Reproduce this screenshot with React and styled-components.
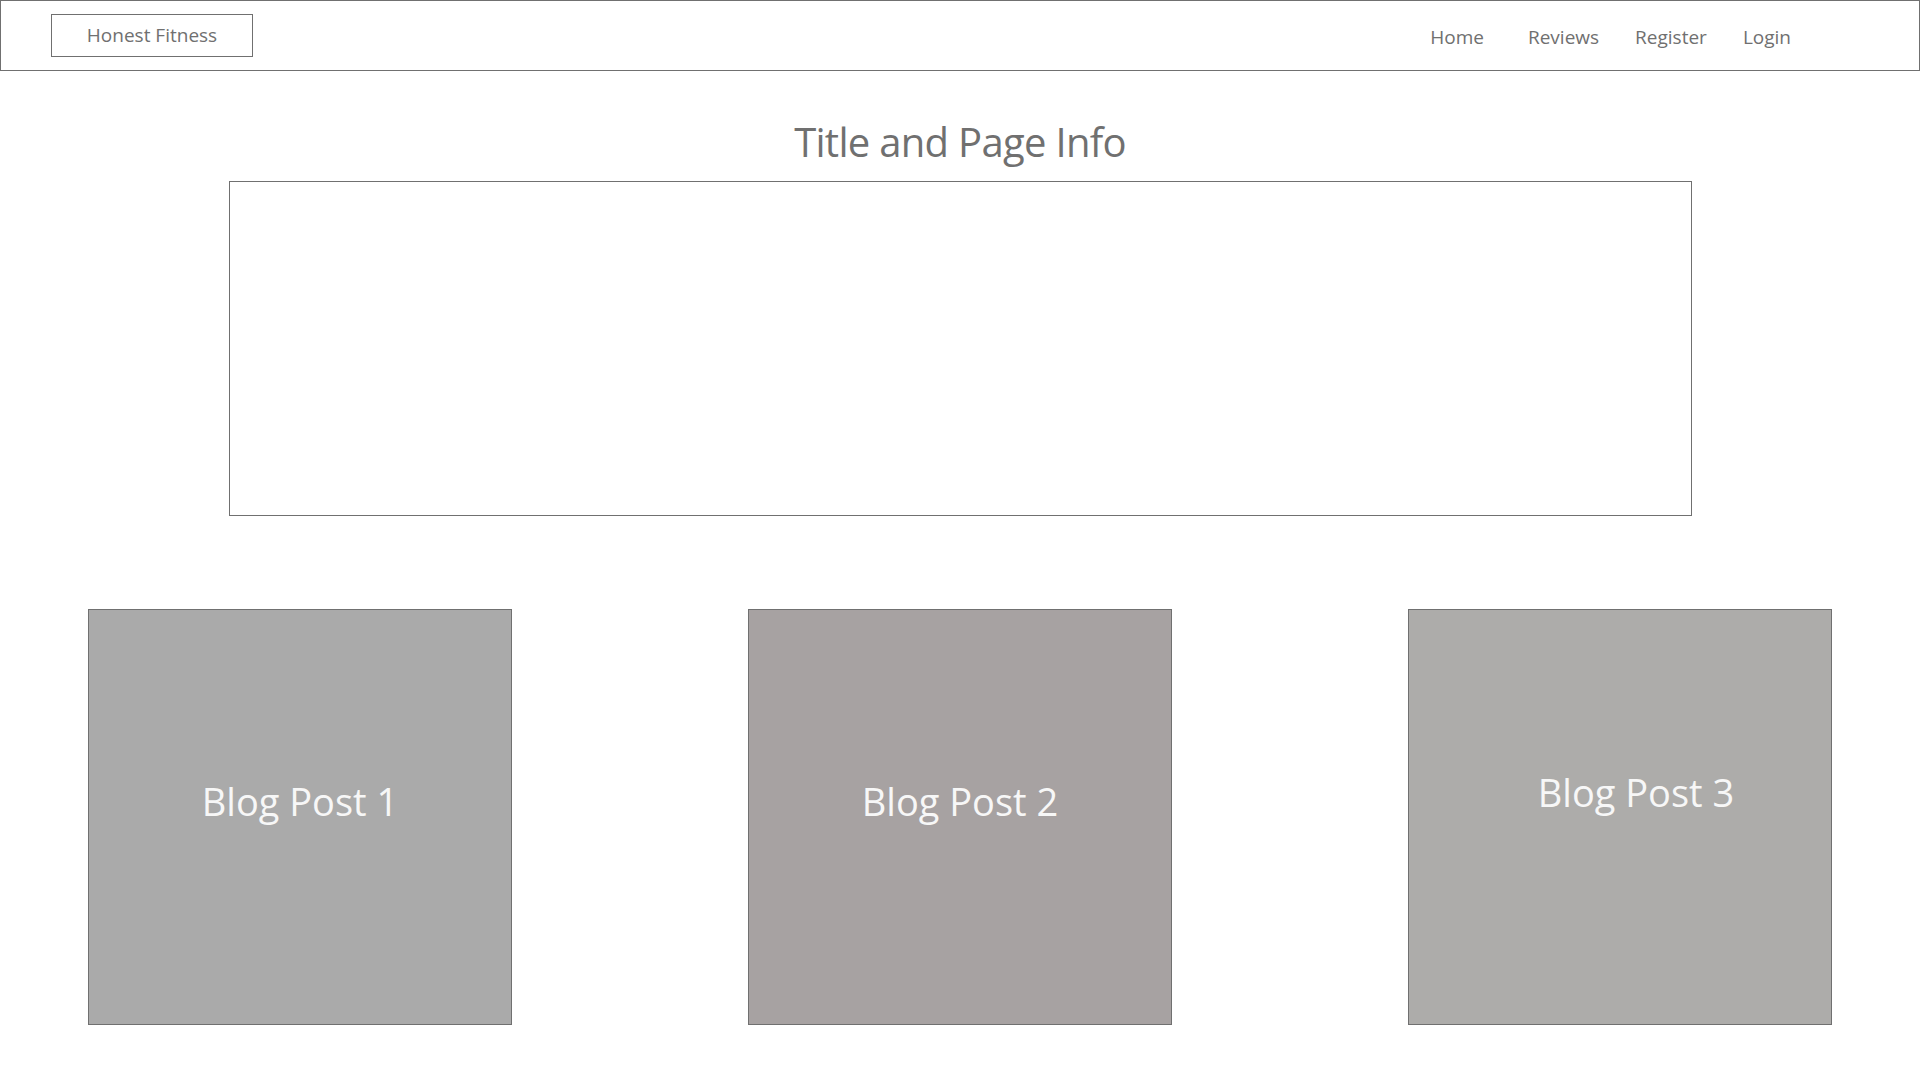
import React from 'react'
import styled, { createGlobalStyle } from 'styled-components'

const GlobalStyle = createGlobalStyle`
    html, body {
        margin: 0;
        padding: 0;
        background: #ffffff;
        font-family: "Open Sans", "Noto Sans", sans-serif;
    }
`;

const Page = styled.div`
    width: 1920px;
    min-height: 1080px;
    display: flex;
    flex-direction: column;
    align-items: center;
`;

const Header = styled.header`
    box-sizing: border-box;
    width: 100%;
    height: 71px;
    border: 1px solid #707070;
    display: flex;
    align-items: center;
    padding: 0 128px 0 50px;
`;

const Logo = styled.div`
    box-sizing: border-box;
    width: 202px;
    height: 43px;
    border: 1px solid #707070;
    display: flex;
    align-items: center;
    justify-content: center;
    padding-bottom: 2px;
    color: #707070;
    font-size: 19px;
`;

const Nav = styled.nav`
    margin-left: auto;
    display: flex;
    gap: 36px;
    padding-top: 2px;
`;

const NavLink = styled.a`
    color: #707070;
    font-size: 19px;
    text-decoration: none;
    margin-right: ${props => props.$extra || 0}px;
`;

const Title = styled.h1`
    margin: 49px 0 0;
    font-size: 40px;
    font-weight: 400;
    line-height: 44px;
    color: #707070;
    letter-spacing: -0.7px;
`;

const InfoBox = styled.section`
    box-sizing: border-box;
    width: 1463px;
    height: 335px;
    margin-top: 17px;
    border: 1px solid #707070;
`;

const CardRow = styled.div`
    box-sizing: border-box;
    width: 100%;
    margin-top: 93px;
    padding: 0 88px;
    display: flex;
    justify-content: space-between;
`;

const Card = styled.article`
    box-sizing: border-box;
    width: 424px;
    height: 416px;
    border: 1px solid #707070;
    background: ${props => props.$bg};
    display: flex;
    align-items: center;
    justify-content: center;
    padding: 0 0 ${props => 32 + props.$lift}px ${props => props.$nudge}px;
    color: #f7f7f7;
    font-size: 38px;
`;

const posts = [
    { title: 'Blog Post 1', bg: '#aaaaaa', lift: 0, nudge: 0 },
    { title: 'Blog Post 2', bg: '#a7a2a2', lift: 0, nudge: 0 },
    { title: 'Blog Post 3', bg: '#adacaa', lift: 18, nudge: 32 },
];

export default function App() {
    return (
        <>
            <GlobalStyle />
            <Page>
                <Header>
                    <Logo>Honest Fitness</Logo>
                    <Nav>
                        <NavLink href="#" $extra={8}>Home</NavLink>
                        <NavLink href="#">Reviews</NavLink>
                        <NavLink href="#">Register</NavLink>
                        <NavLink href="#">Login</NavLink>
                    </Nav>
                </Header>
                <Title>Title and Page Info</Title>
                <InfoBox />
                <CardRow>
                    {posts.map(post => (
                        <Card key={post.title} $bg={post.bg} $lift={post.lift} $nudge={post.nudge}>
                            {post.title}
                        </Card>
                    ))}
                </CardRow>
            </Page>
        </>
    );
}
